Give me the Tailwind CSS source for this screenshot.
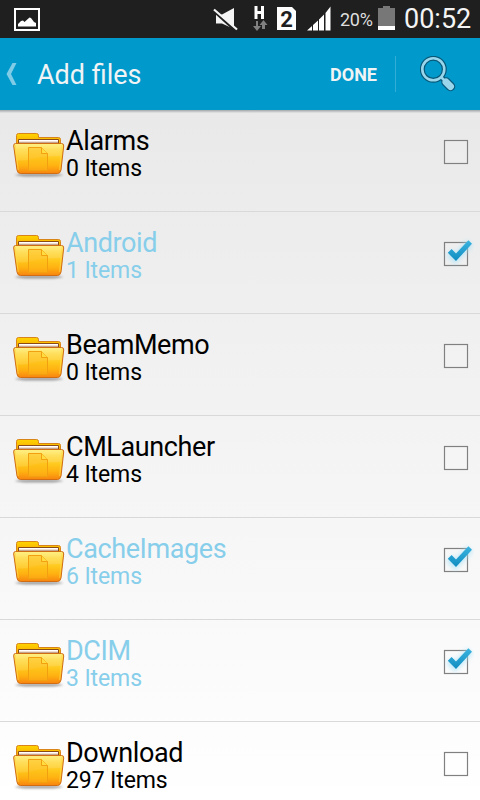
<!DOCTYPE html>
<html lang="en">

<head>
    <meta charset="UTF-8">
    <meta name="viewport" content="width=device-width, initial-scale=1.0">
    <title>Add files</title>
    <script src="https://cdn.jsdelivr.net/npm/@tailwindcss/browser@4"></script>
</head>

<body class="w-[480px] h-[800px] overflow-hidden flex flex-col bg-white font-[Roboto,sans-serif]">

    <!-- Shared icons -->
    <svg class="absolute w-0 h-0">
        <defs>
            <linearGradient id="front" x1="0" y1="0" x2="0" y2="1">
                <stop offset="0" stop-color="#fff07a" />
                <stop offset=".2" stop-color="#ffdc48" />
                <stop offset=".5" stop-color="#ffc81c" />
                <stop offset=".75" stop-color="#ffb010" />
                <stop offset="1" stop-color="#f88410" />
            </linearGradient>
            <linearGradient id="back" x1="0" y1="0" x2="0" y2="1">
                <stop offset="0" stop-color="#ffd400" />
                <stop offset="1" stop-color="#f6a400" />
            </linearGradient>
            <linearGradient id="tick" x1="0" y1="0" x2="0" y2="1">
                <stop offset="0" stop-color="#3cb4e0" />
                <stop offset="1" stop-color="#0f8cc0" />
            </linearGradient>
            <filter id="soft" x="-30%" y="-100%" width="160%" height="300%">
                <feGaussianBlur stdDeviation="1" />
            </filter>
            <filter id="glow" x="-50%" y="-50%" width="200%" height="200%">
                <feGaussianBlur stdDeviation="2" />
            </filter>
        </defs>
        <symbol id="folder" viewBox="0 0 52 48">
            <ellipse cx="26" cy="43" rx="24" ry="1.6" fill="#555" opacity=".55" filter="url(#soft)" />
            <path d="M3.500 13V3.500Q3.500 1.500 5.500 1.500H23.500Q25.500 1.500 25.500 3.500V5.500H45.500Q47.500 5.500 47.500 7.500V13Z" fill="url(#back)" stroke="#d98418" />
            <path d="M5.500 11V7.500H45.500V11Z" fill="#fff" stroke="#8a4a18" />
            <path d="M6 9.500H45" stroke="#f3ded2" />
            <path d="M2.500 11.500H48.500Q51 11.500 50.700 14L48 38Q47.300 41.500 44.500 41.500H7.500Q4.500 41.500 4 38L.7 14Q.4 11.500 2.500 11.500Z" fill="url(#front)" stroke="#cf6c14" />
            <path d="M2 12.500H49L48 24Q30 24 19 27Q12 29 3.500 28.500Z" fill="#fff" opacity=".12" />
            <path d="M2.200 13L5.200 38M49 13L46.700 38" stroke="#ffd84a" opacity=".7" fill="none" />
            <path d="M15.500 15.500H28.500L34.500 21.500V38.500H15.500Z" fill="#fdba18" fill-opacity=".45" stroke="#f2a010" />
            <path d="M28.500 15.500V21.500H34.500" fill="#ffdc40" stroke="#f2a010" />
        </symbol>
        <symbol id="box" viewBox="0 0 36 36">
            <rect x="6.500" y="8.500" width="23" height="23" fill="none" stroke="#fff" stroke-opacity=".1" stroke-width="3" />
            <rect x="6.500" y="8.500" width="23" height="23" fill="#fff" fill-opacity=".1" stroke="#808080" stroke-width="1.200" />
        </symbol>
        <symbol id="box-checked" viewBox="0 0 36 36">
            <rect x="6.500" y="8.500" width="23" height="23" fill="#fff" fill-opacity=".1" stroke="#808080" stroke-width="1.200" />
            <path d="M11 18.500L17 24.500L32 9" fill="none" stroke="#9fe0f8" stroke-width="8" opacity=".6" filter="url(#glow)" />
            <path d="M9.800 18.800L13.600 15L18 19.400L30.400 6.200L34 9.800L18 27Z" fill="url(#tick)" />
        </symbol>
    </svg>

    <!-- Status bar -->
    <div class="h-[38px] shrink-0 bg-[#1f1f1f] flex items-center pl-3.5 pr-[9px]">
        <svg class="w-[26px] h-[23px]" viewBox="0 0 26 23">
            <rect x="1" y="1" width="24" height="21" fill="none" stroke="#fff" stroke-width="2" />
            <path d="M4 18.500V16L7 13L9 12.500L10.500 14L15.500 9.500L17 10L20 14L22 15V18.500Z" fill="#fff" />
        </svg>
        <div class="ml-auto flex items-center h-full text-[#f4f4f4]">
            <svg class="w-[126px] h-[38px]" viewBox="210 0 126 38">
                <path d="M216 14.500H222L234 8V29L222 23.500H216Z" fill="#f4f4f4" />
                <path d="M215 12L236 31" stroke="#1f1f1f" stroke-width="3" />
                <path d="M214 9.500L237 29.500" stroke="#f4f4f4" stroke-width="2.200" />
                <path d="M256 6V19M262.500 6V19M256 12.500H262" stroke="#fff" stroke-width="3" />
                <path d="M256 21V26H253L257 31L261 26H258V21ZM262 29V25H259.500L263.500 20L267.500 25H265V29Z" fill="#808080" />
                <path d="M277 7H292L296 11V30H277Z" fill="#fff" />
                <text x="286.500" y="26.500" text-anchor="middle" class="text-[22px] font-bold font-[Roboto,sans-serif]" fill="#1f1f1f">2</text>
                <path d="M307 30.500L312 26V30.500ZM313 30.500V25L318 20.500V30.500ZM319 30.500V19.500L324 14.500V30.500ZM325.500 30.500V13L330.500 6.500V30.500Z" fill="#fff" />
            </svg>
            <span class="w-[37px] ml-1 text-[18px] leading-[38px] tracking-[-0.3px] text-[#dedede] pt-[2px]">20%</span>
            <svg class="w-[17px] h-6 ml-px mt-[-2px]" viewBox="0 0 17 24">
                <path d="M0 2H5V0H12V2H17V24H0Z" fill="#777" />
                <path d="M0 20H17V24H0Z" fill="#fff" />
            </svg>
            <span class="w-[67px] ml-[9px] text-[27px] leading-[38px]">00:52</span>
        </div>
    </div>

    <!-- Action bar -->
    <div class="h-[72px] shrink-0 bg-[#0099cc] flex items-center pl-1.5 text-[#f0f4f5]">
        <svg class="w-[11px] h-[22px]" viewBox="0 0 11 22">
            <path d="M6.500 0H10.500L5 11L10.500 22H6.500L0.500 11Z" fill="#80cce6" />
        </svg>
        <h1 class="ml-5 mt-[2px] text-[27px]">Add files</h1>
        <button class="ml-auto text-[18px] font-bold">DONE</button>
        <div class="ml-[18px] w-px h-9 bg-[#33add6]"></div>
        <svg class="ml-6 mr-6 w-[36px] h-[36px]" viewBox="0 0 36 36">
            <path d="M21 21L25 25" stroke="#075878" stroke-width="5" />
            <path d="M26 26L30.500 30.500" stroke="#075878" stroke-width="9.500" stroke-linecap="round" />
            <circle cx="13.300" cy="13.300" r="11" fill="none" stroke="#075878" stroke-width="5" />
            <circle cx="13.300" cy="13.300" r="11" fill="none" stroke="#99d6eb" stroke-width="2.600" />
            <path d="M21 21L26 26" stroke="#99d6eb" stroke-width="2.500" />
            <path d="M26 26L30.500 30.500" stroke="#99d6eb" stroke-width="7" stroke-linecap="round" />
        </svg>
    </div>

    <!-- File list -->
    <div class="flex-1 overflow-hidden bg-linear-to-b from-[#e9e9e9] to-white">
        <div class="h-[3px] mb-[-3px] bg-linear-to-b from-[#a3a8aa] to-[#e6e6e6]"></div>
        <div id="files"></div>
    </div>

    <script>
        const folders = [
            { name: 'Alarms', items: 0, checked: false },
            { name: 'Android', items: 1, checked: true },
            { name: 'BeamMemo', items: 0, checked: false },
            { name: 'CMLauncher', items: 4, checked: false },
            { name: 'CacheImages', items: 6, checked: true },
            { name: 'DCIM', items: 3, checked: true },
            { name: 'Download', items: 297, checked: false },
        ];

        document.getElementById('files').innerHTML = folders.map(f => `
            <div class="h-[102px] flex items-start pl-[13px] pr-[6px] border-b border-[#d9d9d9] ${f.checked ? 'text-[#87ceeb]' : 'text-black'}">
                <svg class="w-[52px] h-12 mt-[22px]"><use href="#folder" /></svg>
                <div class="ml-px pt-4">
                    <div class="text-[27px] leading-[31px] tracking-[-0.4px]">${f.name}</div>
                    <div class="text-[23px] leading-6 tracking-[-0.1px]">${f.items} Items</div>
                </div>
                <svg class="ml-auto w-9 h-9 mt-[22px]"><use href="#${f.checked ? 'box-checked' : 'box'}" /></svg>
            </div>
        `).join('');
    </script>

</body>

</html>
